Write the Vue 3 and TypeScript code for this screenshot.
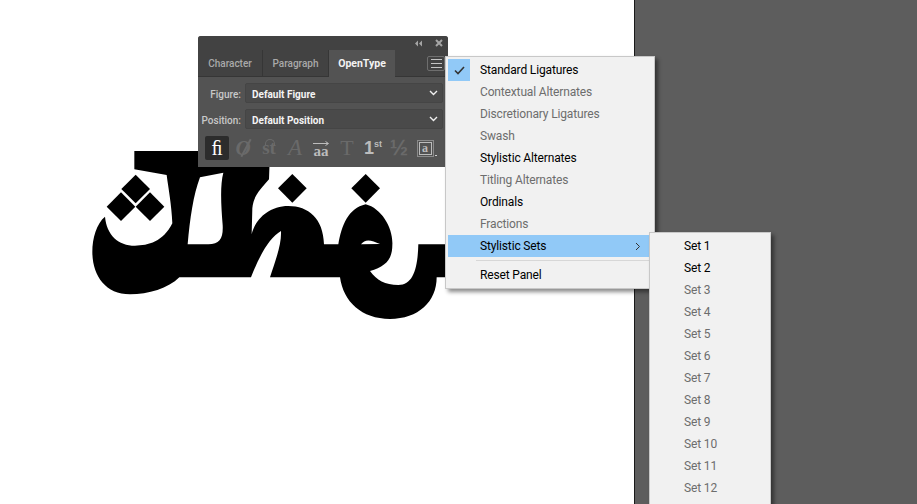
<script setup lang="ts">
const items = [
  { label: 'Standard Ligatures', on: true, checked: true },
  { label: 'Contextual Alternates', on: false },
  { label: 'Discretionary Ligatures', on: false },
  { label: 'Swash', on: false },
  { label: 'Stylistic Alternates', on: true },
  { label: 'Titling Alternates', on: false },
  { label: 'Ordinals', on: true },
  { label: 'Fractions', on: false },
  { label: 'Stylistic Sets', on: true, hover: true, sub: true },
]
const sets = Array.from({ length: 12 }, (_, i) => ({ label: `Set ${i + 1}`, on: i < 2 }))
const diamonds = [
  [152, 132],
  [108, 185],
  [195, 185],
  [622, 130],
  [842, 130],
]
const diamond = (c: number[]) =>
  `M${c[0]} ${c[1] - 43}L${c[0] + 43} ${c[1]}L${c[0]} ${c[1] + 43}L${c[0] - 43} ${c[1]}Z`
</script>

<template>
  <div class="stage">
    <div class="canvas">
      <div class="artboard"></div>
      <div class="workspace"></div>
    </div>

    <svg class="art" viewBox="0 0 1110 555" width="370" height="185">
      <path
        fill-rule="evenodd"
        d="M148 18L555 18L552 103C530 130 505 150 502 190L500 268C510 225 550 183 610 183C670 183 715 220 717 298L760 298C770 240 790 190 842 178C890 190 925 250 922 300C922 345 900 365 855 378C875 405 900 420 940 420C985 420 998 370 1000 298L1085 298L1085 397L1055 397C1055 470 1000 522 915 522C830 522 775 470 765 397L555 397C570 350 590 300 588 258C550 280 520 340 498 397L283 397C250 430 190 448 135 448C60 448 22 390 22 320C22 280 35 235 60 215C65 270 100 302 150 302C190 302 235 290 262 235C260 180 250 130 245 90L148 73Z
        M345 97L415 83C405 120 408 180 413 240C415 280 405 297 370 298L308 298C315 220 325 150 345 97Z
        M828 298C840 280 860 285 885 297Z"
      />
      <path v-for="(d, i) in diamonds" :key="i" :d="diamond(d)" />
    </svg>

    <section class="panel">
      <header class="panel-head">
        <svg width="9" height="7" viewBox="0 0 9 7" class="collapse"><path d="M4 0.5L1 3.5L4 6.5ZM8 0.5L5 3.5L8 6.5Z" /></svg>
        <svg width="8" height="8" viewBox="0 0 8 8" class="close"><path d="M1 1L7 7M7 1L1 7" /></svg>
      </header>
      <div class="tabs">
        <span class="tab first">Character</span>
        <span class="tab">Paragraph</span>
        <span class="tab active">OpenType</span>
        <span class="burger"><i></i><i></i><i></i></span>
      </div>
      <div class="panel-body">
        <div class="field">
          <label>Figure:</label>
          <div class="select">Default Figure
            <svg width="9" height="6" viewBox="0 0 9 6"><path d="M1 1L4.5 4.5L8 1" /></svg>
          </div>
        </div>
        <div class="field">
          <label>Position:</label>
          <div class="select">Default Position
            <svg width="9" height="6" viewBox="0 0 9 6"><path d="M1 1L4.5 4.5L8 1" /></svg>
          </div>
        </div>
        <div class="glyphs">
          <span class="g active">ﬁ</span>
          <span class="g dim oblique">O</span>
          <span class="g dim st">st</span>
          <span class="g dim script">A</span>
          <span class="g mid small">
            <svg width="17" height="5" viewBox="0 0 17 5" class="arrow"><path d="M0 2.5H15M12.5 0.5L15.5 2.5L12.5 4.5" /></svg>
            aa
          </span>
          <span class="g dim title">T</span>
          <span class="g mid sans"><em>1</em><sup>st</sup></span>
          <span class="g dim sans frac">½</span>
          <span class="g mid boxed"><b>a</b><i></i></span>
        </div>
      </div>
    </section>

    <ul class="menu">
      <li
        v-for="it in items"
        :key="it.label"
        :class="{ off: !it.on, hover: it.hover }"
      >
        <span class="check" :class="{ checked: it.checked }">
          <svg v-if="it.checked" width="11" height="9" viewBox="0 0 11 9"><path d="M1 4.5L4 7.5L10 1" /></svg>
        </span>
        <span class="label">{{ it.label }}</span>
        <svg v-if="it.sub" class="chev" width="6" height="9" viewBox="0 0 6 9"><path d="M1 1L4.5 4.5L1 8" /></svg>
      </li>
      <li class="sep"></li>
      <li><span class="check"></span><span class="label">Reset Panel</span></li>
    </ul>

    <ul class="submenu">
      <li v-for="s in sets" :key="s.label" :class="{ off: !s.on }">{{ s.label }}</li>
    </ul>
  </div>
</template>

<style>
html, body { margin: 0; overflow: hidden; background: #fff; }
</style>

<style scoped>
.stage {
  position: relative;
  width: 917px;
  height: 504px;
  overflow: hidden;
  font-family: Roboto, sans-serif;
}
.canvas { display: flex; width: 917px; height: 504px; }
.artboard { width: 634px; background: #fff; }
.workspace { flex: 1; background: #5d5d5d; border-left: 1px solid #1a1a1a; }
.art { position: absolute; left: 85px; top: 145px; }

.panel {
  position: absolute;
  left: 198px;
  top: 36px;
  width: 250px;
  height: 131px;
  background: #535353;
  border-radius: 3px 3px 0 0;
  display: flex;
  flex-direction: column;
  font-family: Roboto, sans-serif;
}
.panel-head {
  height: 14px;
  background: #424242;
  display: flex;
  align-items: center;
  justify-content: flex-end;
  gap: 12px;
  padding: 0 5px 0 0;
  border-radius: 3px 3px 0 0;
}
.collapse path { fill: #a5a5a5; }
.close path { stroke: #a5a5a5; stroke-width: 2; fill: none; }
.tabs {
  height: 27px;
  background: #424242;
  display: flex;
  align-items: stretch;
  position: relative;
  box-shadow: inset 0 -1px 0 #363636;
}
.tab {
  width: 66px;
  box-sizing: border-box;
  border-right: 1px solid #363636;
  color: #a9a9a9;
  font-size: 10px;
  font-weight: 500;
  display: flex;
  align-items: center;
  justify-content: center;
}
.tab.first { width: 65px; }
.tab.active { background: #535353; color: #f2f2f2; border-right: 0; font-weight: 700; font-size: 10.5px; }
.burger {
  position: absolute;
  right: 3px;
  top: 6px;
  width: 18px;
  height: 15px;
  border: 1px solid #6e6e6e;
  border-radius: 2px;
  display: flex;
  flex-direction: column;
  justify-content: center;
  align-items: center;
  gap: 3px;
  box-sizing: border-box;
}
.burger i { display: block; width: 11px; height: 1px; background: #c4c4c4; }
.panel-body { flex: 1; padding: 6px 5px 0 0; display: flex; flex-direction: column; gap: 6px; }
.field { display: flex; align-items: center; height: 20px; }
.field label {
  width: 43px;
  text-align: right;
  color: #c8c8c8;
  font-size: 10px;
  font-weight: 500;
  margin-right: 4px;
  padding-top: 2px;
}
.select {
  flex: 1;
  height: 20px;
  background: #4a4a4a;
  border: 1px solid #454545;
  border-radius: 2px;
  box-sizing: border-box;
  color: #f4f4f4;
  font-size: 10px;
  font-weight: 700;
  display: flex;
  align-items: center;
  justify-content: space-between;
  padding: 2px 4px 0 6px;
}
.select svg { margin-top: -2px; }
.select path { fill: none; stroke: #f0f0f0; stroke-width: 1.4; }
.glyphs { display: flex; padding-left: 7px; margin-top: 1px; font-family: "Liberation Serif", serif; }
.g {
  width: 24px;
  margin-right: 2px;
  height: 24px;
  display: flex;
  align-items: center;
  justify-content: center;
  font-size: 20px;
  position: relative;
}
.g.active { background: #2c2c2c; color: #fff; border-radius: 2px; }
.g.dim { color: #6a6a6a; }
.g.mid { color: #bcbcbc; }
.g.oblique { font-style: italic; font-weight: 700; font-size: 21px; }
.g.oblique::after {
  content: "";
  position: absolute;
  width: 2px;
  height: 20px;
  left: 14px;
  top: 2px;
  background: #6a6a6a;
  transform: rotate(28deg);
}
.g.st { font-weight: 700; font-size: 19px; }
.g.st::after {
  content: "";
  position: absolute;
  left: 8px;
  top: 3px;
  width: 8px;
  height: 5px;
  border: 1px solid #6a6a6a;
  border-bottom: 0;
  border-radius: 5px 5px 0 0;
}
.g.script { font-style: italic; font-size: 23px; }
.g.small { font-size: 15px; font-weight: 700; padding-top: 7px; box-sizing: border-box; }
.arrow { position: absolute; top: 5px; left: 4px; }
.arrow path { fill: none; stroke: #bcbcbc; stroke-width: 1; }
.g.title { font-size: 22px; }
.g.sans { font-family: "Liberation Sans", sans-serif; }
.g em { font-style: normal; font-size: 18px; font-weight: 700; }
.g sup { font-size: 9px; font-weight: 700; margin: -8px 0 0 0; line-height: 1; }
.g.frac { font-size: 22px; font-weight: 700; }
.boxed b {
  width: 11px;
  height: 11px;
  border: 1px solid #bcbcbc;
  outline: 1px solid #8a8a8a;
  outline-offset: 1px;
  font-size: 12px;
  line-height: 11px;
  text-align: center;
  display: block;
}
.boxed i {
  position: absolute;
  right: 0;
  bottom: 4px;
  width: 2px;
  height: 1px;
  background: #d0d0d0;
}

.menu, .submenu {
  position: absolute;
  margin: 0;
  padding: 0;
  list-style: none;
  background: #f1f1f1;
  border: 1px solid #c8c8c8;
  box-shadow: 3px 3px 4px rgba(0, 0, 0, 0.45);
  font-size: 12px;
  letter-spacing: -0.15px;
  color: #000;
  box-sizing: border-box;
}
.menu {
  left: 445px;
  top: 56px;
  width: 210px;
  height: 233px;
  padding: 2px;
}
.menu li { height: 22px; display: flex; align-items: center; }
.menu li.off .label { color: #6d6d6d; }
.menu li.hover { background: #91c9f7; }
.check { width: 32px; height: 22px; display: flex; align-items: center; justify-content: center; flex: none; box-sizing: border-box; padding-right: 10px; }
.check.checked { background: #91c9f7; width: 22px; padding: 0; margin-right: 10px; }
.check path { fill: none; stroke: #333; stroke-width: 1.6; }
.label { flex: 1; }
.chev { margin-right: 11px; }
.chev path { fill: none; stroke: #333; stroke-width: 1; }
.menu li.sep { height: 1px; background: #d7d7d7; margin: 3px 0 3px 28px; }
.submenu {
  left: 649px;
  top: 232px;
  width: 122px;
  height: 290px;
  padding: 2px 0 0 34px;
  z-index: 2;
}
.submenu li { height: 22px; line-height: 22px; }
.submenu li.off { color: #6d6d6d; }
</style>
